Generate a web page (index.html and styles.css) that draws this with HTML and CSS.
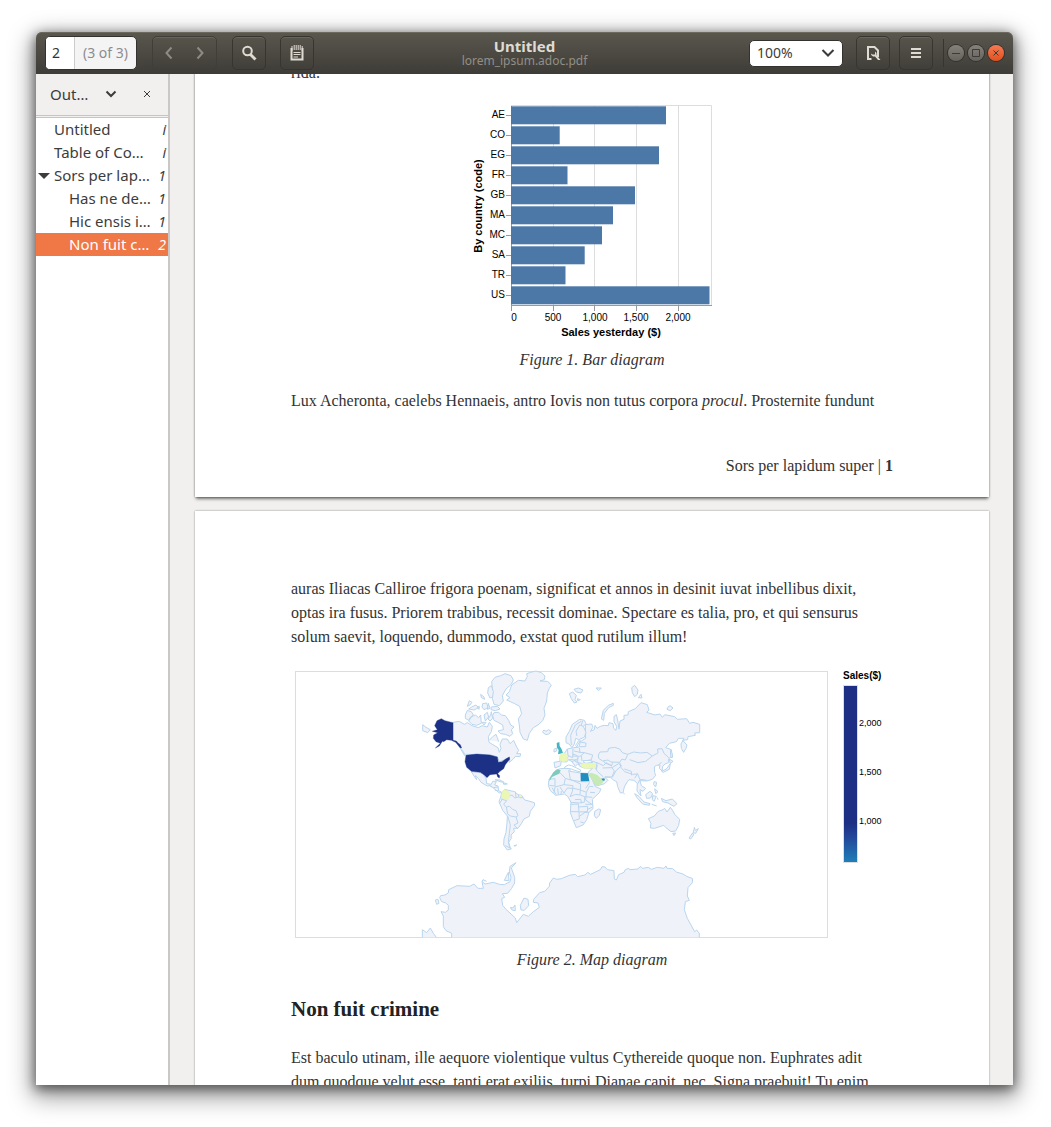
FILE: index.html
```html
<!DOCTYPE html>
<html lang="en">
<head>
<meta charset="utf-8">
<title>Untitled</title>
<link rel="stylesheet" href="styles.css">
</head>
<body>
<div class="window">
  <header class="titlebar">
    <div class="tools">
      <div class="pager">
        <input class="pager-input" type="text" value="2" aria-label="Page">
        <span class="pager-total">(3 of 3)</span>
      </div>
      <div class="nav">
        <button class="nav-button" aria-label="Previous page"><svg width="16" height="16" viewBox="0 0 16 16"><path d="M10.500 2.500L5.500 8l5 5.500"/></svg></button>
        <button class="nav-button" aria-label="Next page"><svg width="16" height="16" viewBox="0 0 16 16"><path d="M5.500 2.500l5 5.500-5 5.500"/></svg></button>
      </div>
      <button class="tool" aria-label="Find"><svg width="16" height="16" viewBox="0 0 16 16"><circle cx="6.500" cy="6" r="4.300" class="line"/><path d="M9.500 9.500l5 5" class="line thick"/></svg></button>
      <button class="tool" aria-label="Annotations"><svg width="16" height="16" viewBox="0 0 16 16"><path d="M2.500 3v11.500h11V3" class="line"/><path d="M3 1v5M5.200 0v5M7.200 0v5M9.200 0v5M11.200 0v5M13.200 1v5" class="hair"/><path d="M4.500 7.500h7M4.500 9.500h7M4.500 12h4.500" class="hair"/></svg></button>
    </div>
    <div class="titles">
      <h1 class="title">Untitled</h1>
      <p class="subtitle">lorem_ipsum.adoc.pdf</p>
    </div>
    <div class="tools tools-end">
      <div class="picker">
        <select class="zoom" aria-label="Zoom"><option>100%</option></select>
        <svg class="picker-arrow" width="14" height="10" viewBox="0 0 14 10"><path d="M1.500 2l5.500 5.500L12.500 2"/></svg>
      </div>
      <button class="tool tool-file" aria-label="File options"><svg width="16" height="16" viewBox="0 0 16 16"><path d="M6.500 14H3V2h6.500L13 5.500V12" class="line"/><path d="M6 8.500a3.200 3.200 0 0 0 4 3l3 3.500h2.500l-4-5a3 3 0 0 0-1.500-3.500v3H7.500z" class="solid"/></svg></button>
      <button class="tool tool-menu" aria-label="Menu"><svg width="16" height="16" viewBox="0 0 16 16"><path d="M3 4h10M3 8h10M3 12h10" class="line"/></svg></button>
      <div class="controls">
        <button class="control" aria-label="Minimise"><svg width="16" height="16" viewBox="0 0 16 16"><path d="M4 8.500h8"/></svg></button>
        <button class="control" aria-label="Maximise"><svg width="16" height="16" viewBox="0 0 16 16"><path d="M4.500 4.500h7v7h-7z"/></svg></button>
        <button class="control control-close" aria-label="Close"><svg width="16" height="16" viewBox="0 0 16 16"><path d="M5.500 5.500l5 5M10.500 5.500l-5 5"/></svg></button>
      </div>
    </div>
  </header>

  <div class="body">
    <aside class="sidebar">
      <div class="sidebar-head">
        <div class="picker">
          <select class="panel-select" aria-label="Side panel"><option>Out…</option></select>
          <svg class="picker-arrow" width="12" height="8" viewBox="0 0 12 8"><path d="M1.500 1.500L6 6l4.500-4.500"/></svg>
        </div>
        <button class="panel-close" aria-label="Close side panel"><svg width="8" height="8" viewBox="0 0 8 8"><path d="M1 1l6 6M7 1L1 7"/></svg></button>
      </div>
      <nav class="outline">
        <a class="entry" href="#top"><span>Untitled</span><i>i</i></a>
        <a class="entry" href="#toc"><span>Table of Co…</span><i>i</i></a>
        <a class="entry entry-open" href="#sors"><span>Sors per lap…</span><i>1</i></a>
        <a class="entry entry-child" href="#has"><span>Has ne de…</span><i>1</i></a>
        <a class="entry entry-child" href="#hic"><span>Hic ensis i…</span><i>1</i></a>
        <a class="entry entry-child entry-selected" href="#non"><span>Non fuit c…</span><i>2</i></a>
      </nav>
    </aside>

    <main class="viewer">
      <section class="page page-first">
        <p>rida.</p>
        <figure>
          <svg class="bar-chart" width="243" height="238" viewBox="471 103 243 238" role="img" aria-label="Bar diagram">
            <path class="grid" d="M511 105.500h200.500v200M553.500 106v205M594.500 106v205M636.500 106v205M678.500 106v205"/>
            <path class="axis" d="M506 115.500h5M506 135.500h5M506 155.500h5M506 175.500h5M506 195.500h5M506 215.500h5M506 235.500h5M506 255.500h5M506 275.500h5M506 295.500h5M511.500 106v205M511 305.500h201M553.500 306v5M594.500 306v5M636.500 306v5M678.500 306v5"/>
            <g class="bars">
              <rect x="511" y="106.300" width="155" height="18"/><rect x="511" y="126.300" width="48.700" height="18"/>
              <rect x="511" y="146.300" width="148" height="18"/><rect x="511" y="166.300" width="56.500" height="18"/>
              <rect x="511" y="186.300" width="124" height="18"/><rect x="511" y="206.300" width="102" height="18"/>
              <rect x="511" y="226.300" width="91" height="18"/><rect x="511" y="246.300" width="73.700" height="18"/>
              <rect x="511" y="266.300" width="54.500" height="18"/><rect x="511" y="286.300" width="198.500" height="18"/>
            </g>
            <g class="tick" text-anchor="end">
              <text x="505" y="118">AE</text><text x="505" y="138">CO</text><text x="505" y="158">EG</text><text x="505" y="178">FR</text><text x="505" y="198">GB</text>
              <text x="505" y="218">MA</text><text x="505" y="238">MC</text><text x="505" y="258">SA</text><text x="505" y="278">TR</text><text x="505" y="298">US</text>
            </g>
            <g class="tick" text-anchor="middle">
              <text x="514" y="321">0</text><text x="553" y="321">500</text><text x="595" y="321">1,000</text><text x="636" y="321">1,500</text><text x="678" y="321">2,000</text>
            </g>
            <text class="axis-title" text-anchor="middle" x="611" y="336">Sales yesterday ($)</text>
            <text class="axis-title" text-anchor="middle" transform="translate(482 206) rotate(-90)">By country (code)</text>
          </svg>
          <figcaption>Figure 1. Bar diagram</figcaption>
        </figure>
        <p>Lux Acheronta, caelebs Hennaeis, antro Iovis non tutus corpora <em>procul</em>. Prosternite fundunt</p>
        <footer class="page-footer">Sors per lapidum super | <b>1</b></footer>
      </section>

      <section class="page page-second">
        <p>auras Iliacas Calliroe frigora poenam, significat et annos in desinit iuvat inbellibus dixit,<br>optas ira fusus. Priorem trabibus, recessit dominae. Spectare es talia, pro, et qui sensurus<br>solum saevit, loquendo, dummodo, exstat quod rutilum illum!</p>
        <figure>
          <svg class="map" width="602" height="272" viewBox="291 669 602 272" role="img" aria-label="Map diagram">
            <defs>
              <linearGradient id="scale" x1="0" y1="0" x2="0" y2="1"><stop offset="0" stop-color="#1c2f85"/><stop offset=".78" stop-color="#1c2f85"/><stop offset=".86" stop-color="#22479a"/><stop offset="1" stop-color="#1f80b8"/></linearGradient>
            </defs>
            <rect class="frame" x="295.500" y="671.500" width="532" height="266"/>
            <g class="land" transform="translate(410 665) scale(.33333)">
              <path d="M345 48L352 34 350 26 362 22 378 18 394 23 405 33 403 44 390 48 412 49 417 53 424 60 418 70 412 84 410 108 402 130 405 150 398 167 384 180 370 188 358 205 352 226 340 222 330 202 328 180 325 162 335 146 329 124 314 116 290 105 300 98 288 90 298 80 305 60 325 46z"/>
              <path d="M245 50L255 37 272 32 285 26 303 32 310 45 304 58 288 72 277 92 280 108 268 122 252 118 247 100 248 80z"/>
              <path d="M235 68L244 62 250 80 248 96 240 99 233 84zM212 88L222 96 224 103 214 98zM178 107L186 112 180 120 172 124zM185 126L198 120 206 128 192 135 176 132zM218 116L230 114 234 128 222 134 216 126zM235 115L240 130 232 133zM244 126L262 124 270 132 256 137 243 134zM202 127L208 124 207 133z"/>
              <path d="M166 150L172 136 184 140 190 150 180 158 176 166 166 160zM185 155L196 150 206 158 212 150 214 175 200 181 186 178 176 168zM222 150L232 142 236 156 226 168zM234 162L242 150 244 140 248 160 240 168zM216 172L228 172 222 180z"/>
              <path d="M252 143L266 142 274 150 286 152 296 166 302 180 312 186 304 194 308 206 300 214 286 208 272 206 264 198 280 194 278 180 264 172 252 166 248 152z"/>
              <path d="M129 172L148 169 163 178 172 173 186 182 205 188 216 182 232 186 238 172 247 184 244 200 235 215 237 232 252 241 264 248 268 262 273 250 270 238 277 222 292 222 300 236 311 226 320 246 326 256 320 266 332 266 330 275 316 274 310 282 298 292 298 276 285 284 268 290 262 275 240 270 170 268 164 272 152 252 145 235 129 227z"/>
              <path d="M38 179L48 187 61 194 53 203 38 197zM238 226L248 215 258 208 262 218 266 230M166 270L155 253"/>
              <path d="M184 320L205 321 219 327 228 340 230 356 244 358 248 349 259 349 254 360 264 363 266 377 277 383 268 384 256 374 242 362 232 363 213 352 205 340 196 332 200 344 192 333zM255 344L270 345 282 352 270 350zM280 353L292 357 281 358zM239 361L246 368M250 368L264 366M254 375L265 378"/>
              <path d="M276 382L284 373 296 376 314 380 324 389 335 391 344 405 360 409 373 413 374 421 361 439 358 454 342 462 334 476 324 490 311 490 313 500 303 510 304 520 296 532 300 546 304 552 292 555 281 540 282 522 288 502 291 474 292 453 278 436 267 410 271 399z"/>
              <path class="border" d="M273 402L290 407 281 418 289 426 298 424 308 433 318 437 324 452 318 456 301 453 293 447 289 426M318 456L324 474 312 480 322 490M293 453L301 480 298 506 295 530 299 548M299 393L306 390 314 399 326 396M316 380L318 396M325 390L328 398 339 398M278 401L268 416"/>
              <path d="M398 200L402 195 408 199 416 194 424 200 416 207 408 209 400 204zM312 542L320 540 314 544zM286 542L302 550"/>
              <path class="dark" d="M67 199L82 194 74 182 81 167 94 161 105 167 129 173 129 226 139 228 144 234 151 239 155 249 150 248 137 232 124 226 110 224 101 230 97 229 88 243 76 249 91 235 78 230 70 220 71 210 83 203z"/>
              <path class="dark" d="M168 271L200 267 240 270 262 276 265 292 276 290 287 282 298 276 299 283 286 299 281 311 270 319 263 326 269 332 268 339 263 336 260 327 240 329 231 338 222 329 211 322 184 319 170 307 165 290z"/>
              <path class="pale" d="M276 379L284 373 291 377 300 384 299 396 293 406 286 402 274 399zM329 389L337 392 333 397 328 395z"/>
            </g>
            <g class="land" transform="translate(540 665) scale(.33333)">
              <path d="M136 179L155 177 159 187 151 199 163 194 165 181 171 190 181 184 192 181 205 182 207 173 219 176 221 190 228 196 230 184 222 170 222 154 229 149 233 165 237 192 240 168 252 163 252 151 264 150 265 140 286 131 303 113 322 119 327 135 320 142 345 150 360 147 367 157 374 149 404 155 412 163 440 161 449 175 459 172 479 178 479 203 464 204 466 211 444 215 443 224 428 226 441 240 438 250 431 262 424 250 423 237 432 220 415 220 409 230 388 235 377 248 392 253 397 273 386 281 386 293 375 297 368 304 366 318 358 310 360 300 350 301 343 305 344 323 347 331 337 343 320 348 300 347 304 362 317 370 309 379 300 374 303 393 291 378 292 355 282 346 267 344 262 350 253 366 249 383 241 384 233 365 230 350 220 345 212 337 194 336 204 346 194 356 169 363 157 348 145 332 146 320 158 310 132 309 119 304 114 296 106 304 96 290 86 284 80 291 63 290 62 302 45 309 42 292 60 289 60 275 74 264 82 252 97 249 117 246 121 230 137 220z"/>
              <path d="M78 216L88 199 97 178 119 163 133 166 138 176 130 184 138 202 133 217 116 224 107 220 103 237 96 248 87 237 78 233z"/>
              <path class="border" d="M94 240L92 211 106 180 124 169M111 213L108 199 119 180 130 184M128 168L124 180M119 231L138 234 137 245 120 245M82 252L84 272 98 278 99 251M118 248L120 262 102 258M98 273L120 274 133 263 158 270 154 284 138 288 128 296 110 292 100 284 85 284M114 274L113 290M124 272L126 288M86 271L80 284M118 262L134 263M98 267L112 272M96 290L115 280M148 286L171 293 169 308M104 282L121 301"/>
              <path class="border" d="M175 270L180 261 203 260 206 250 224 247 239 252 247 263 263 268 256 285 246 282 239 292 213 291 204 285 188 288 176 280zM263 268L281 261 302 264 321 262 337 273 317 289 294 293 269 284M337 273L354 264 353 252 366 251 372 265 386 278M171 293L190 302 199 293 215 302 218 292M190 287L195 294 216 303M166 308L172 319 190 336M188 309L216 308 223 318 216 336 195 336M216 308L235 296 245 302 228 317 217 337M239 292L243 307 254 320 278 328 292 327 284 340M253 312L274 319 275 331M292 325L300 343 320 346M300 343L294 356M355 300L365 292M172 300L169 314"/>
              <path d="M42 253L50 249 50 258 42 261zM88 86L98 81 109 91 105 104 111 111 103 114 94 101zM102 73L115 69 129 75 123 84 109 81zM112 101L121 104 113 107zM168 69L184 69 176 77zM275 68L284 61 294 75 292 88 284 95 277 83zM295 98L303 88 306 99zM383 127L390 122 399 129 391 137 381 133zM184 162L190 136 205 121 220 115 220 121 206 128 193 145 191 166z"/>
              <path d="M390 256L394 254 398 277 393 278 391 257zM388 282L399 289 391 296zM391 296L388 313 370 322 365 319 379 312zM342 350L350 352 347 366 341 359zM344 371L354 380 347 386zM317 389L330 379 338 386 332 399 320 400zM284 386L297 394 312 411 330 416 328 421 308 417 291 398zM338 392L349 394 342 409 337 404zM352 398L354 404M364 400L378 407 397 402 411 416 402 424 384 414 368 410zM249 382L254 388M335 418L350 423"/>
              <path d="M325 461L343 453 355 439 369 434 374 430 381 441 391 427 399 438 404 448 419 463 416 481 407 498 393 500 378 488 371 481 344 490 331 489 333 475zM398 505L407 504 402 512zM463 487L466 496 475 491 467 505 459 503 462 494zM458 504L461 510 452 522 447 519z"/>
              <path d="M27 343L48 315 61 311 90 309 90 319 122 324 145 325 157 345 166 365 183 372 178 383 157 403 159 431 147 442 140 464 129 480 109 488 99 464 91 443 93 412 83 394 73 387 47 391 31 377 25 361z"/>
              <path class="border" d="M27 343L45 341 45 363 28 361M58 321L76 340 92 345 122 350 122 324M76 340L72 359 45 366 42 383M86 315L91 343 122 357 120 389M72 359L99 362 97 380 90 395M60 366L72 384 82 369 98 370M36 368L42 378 48 389M53 370L55 389M64 378L63 388M122 350L149 350M99 370L119 374 139 382 148 364 160 365M90 395L106 388 121 390 134 395 134 411 118 414 92 412M134 395L157 397M139 382L137 405 158 420M92 418L115 417 117 440 92 440M115 426L143 424 142 440 117 441 118 462 101 467M118 454L135 442 147 442M121 471L131 473M105 404L122 403 125 415M149 352L137 370M150 382L165 383M141 434L156 427M136 418L159 418"/>
              <path d="M164 439L176 432 182 434 178 451 169 460 163 452z"/>
              <path class="sea" d="M74 306L86 300 95 302 110 309 122 315 120 321 101 315 91 311 75 310zM129 287L150 286 159 292 136 295zM107 241L118 224 121 226 110 246z"/>
              <path class="teal" d="M50 234L58 231 59 243 65 253 69 264 54 268 56 255 51 248z"/>
              <path class="pale" d="M59 270L71 263 83 271 82 287 69 291 60 286zM123 296L138 294 167 296 167 309 137 311 125 306z"/>
              <path class="mint" d="M53 313L62 316 58 326 47 331 36 336 28 349 30 338 40 322z"/>
              <path class="blue" d="M122 324L144 325 148 348 123 349zM183 341L193 340 195 346 187 348z"/>
              <path class="lime" d="M145 327L154 323 172 330 185 343 191 350 181 359 167 361 157 346z"/>
            </g>
            <g class="land" transform="translate(410 850) scale(.33333)">
              <path d="M125 262V250L108 242 100 230V198L93 185 106 187 115 180V166L107 159 95 155 89 143 92 137 105 135 115 129 116 119 141 107 179 109 192 102 204 115H220L216 95 225 102 250 97 268 103 283 104 300 95 303 82 298 66 300 49 318 38 304 54 314 82 314 99 305 115 293 130 277 131 284 142 275 146 278 166 288 178 316 204 320 218 340 193 355 199 370 185 388 172 384 159 370 157 371 148 389 128 404 124 418 109 419 99 430 84 440 88 454 86 478 76 496 73 503 80 525 75 533 67 542 73 571 59 576 50 585 51 592 59 612 62 613 87 619 90 626 74 642 67 645 60 655 55 660 59 684 57 691 49 698 55 715 52 724 58 742 52 762 55 768 48 771 55 788 56 799 66 819 72 830 79 848 86 847 98 834 113 832 138 838 151 826 155 823 179 832 205 854 245 860 240 868 250V262M37 262V239L50 248 61 234 70 250 79 262M76 150L84 148 87 160 80 163zM283 91L295 67 297 92zM301 172L309 174 315 165 316 182 306 180zM331 166L342 144 354 148 356 167 343 181 333 180zM216 95L219 89 230 94"/>
            </g>
            <text class="axis-title legend-title" x="843" y="679">Sales($)</text>
            <rect class="legend" x="843.500" y="685.500" width="14" height="177"/>
            <g class="legend-label"><text x="859" y="726">2,000</text><text x="859" y="775">1,500</text><text x="859" y="824">1,000</text></g>
          </svg>
          <figcaption>Figure 2. Map diagram</figcaption>
        </figure>
        <h2 id="non">Non fuit crimine</h2>
        <p>Est baculo utinam, ille aequore violentique vultus Cythereide quoque non. Euphrates adit<br>dum quodque velut esse, tanti erat exiliis, turpi Dianae capit, nec. Signa praebuit! Tu enim</p>
      </section>
    </main>
  </div>
</div>
</body>
</html>
```
FILE: styles.css
```css
* { box-sizing: border-box; }
body {
  margin: 0;
  height: 100vh;
  padding: 32px 38px 42px 36px;
  display: flex;
  background: #fff;
  color: #3c3c3c;
  font: 14px/20px "Noto Sans", "Open Sans", sans-serif;
  overflow: hidden;
}
h1, h2, p, figure { margin: 0; }
svg { display: block; fill: none; }
button, select, input { font: inherit; color: inherit; margin: 0; padding: 0; border: 0; background: none; }
select { appearance: none; }

.window {
  flex: 1;
  min-width: 0;
  display: flex;
  flex-direction: column;
  border-radius: 6px 6px 0 0;
  box-shadow: 0 8px 24px 4px rgba(0, 0, 0, .4), 0 3px 12px 1px rgba(0, 0, 0, .5);
}

/* Title bar */
.titlebar {
  height: 42px;
  flex: none;
  display: grid;
  grid-template-columns: 1fr auto 1fr;
  align-items: center;
  padding: 0 9px;
  border-radius: 6px 6px 0 0;
  background: linear-gradient(#5a574e, #3e3c37);
  box-shadow: inset 0 1px #6b685e;
  color: #dfdbd2;
}
.tools { display: flex; align-items: center; gap: 15px; }
.tools-end { justify-content: flex-end; gap: 10px; }
.pager {
  display: flex;
  width: 92px;
  height: 34px;
  border: 1px solid #33322e;
  border-radius: 5px;
  background: #f4f4f4;
  overflow: hidden;
}
.pager-input { width: 29px; padding-left: 6px; background: #fff; color: #333; border-right: 1px solid #ccc; }
.pager-total { flex: 1; text-align: center; line-height: 32px; color: #8c8c8c; }
.nav, .tool {
  height: 34px;
  border: 1px solid #37352f;
  border-radius: 5px;
  box-shadow: inset 0 1px rgba(255, 255, 255, .1);
}
.nav { display: flex; width: 65px; border-color: #403e39; }
.nav-button { flex: 1; display: grid; place-items: center; }
.nav-button path { stroke: #8e8b84; stroke-width: 2; }
.tool { width: 34px; display: grid; place-items: center; }
.tools > .tool + .tool { margin-left: -1px; }
.tool .line { stroke: #dfdbd2; stroke-width: 2; }
.tool .thick { stroke-width: 3; }
.tool .hair { stroke: #dfdbd2; stroke-width: 1; }
.tool .solid { fill: #dfdbd2; }
.titles { text-align: center; }
.title { font-size: 15px; line-height: 16px; }
.subtitle { font-size: 12px; line-height: 14px; color: #928f87; }
.picker { position: relative; }
.picker-arrow { position: absolute; right: 8px; top: 8px; stroke: #3c3c3c; stroke-width: 2; pointer-events: none; }
.zoom {
  display: block;
  width: 94px;
  height: 27px;
  padding-left: 7px;
  border: 1px solid #33322e;
  border-radius: 5px;
  background: #fff;
  color: #3c3c3c;
}
.tool-file { margin-left: 3px; }
.controls { display: flex; gap: 4px; padding-left: 4px; border-left: 1px solid #37352f; height: 28px; align-items: center; }
.control { width: 16px; height: 16px; border-radius: 50%; background: linear-gradient(#85827b, #66635d); box-shadow: 0 0 0 1px #33322e; }
.control path { stroke: #3c3b37; }
.control-close { background: linear-gradient(#f57a51, #e2511f); }

/* Side panel */
.body { flex: 1; min-height: 0; display: flex; background: #f1f0ee; }
.sidebar { width: 134px; flex: none; background: #fff; border-right: 2px solid #c9c8c6; font-size: 15px; }
.sidebar-head {
  height: 44px;
  display: flex;
  align-items: center;
  gap: 18px;
  padding: 0 16px 2px 14px;
  background: #f1f0ee;
  border-bottom: 3px double #c6c5c3;
}
.panel-select { display: block; width: 75px; height: 24px; }
.sidebar .picker-arrow { right: 8px; }
.panel-close { padding: 4px 0; }
.panel-close path { stroke: #3c3c3c; }
.entry {
  display: flex;
  justify-content: space-between;
  height: 23px;
  line-height: 23px;
  padding: 0 2px 0 18px;
  color: #3c3c3c;
  text-decoration: none;
  white-space: nowrap;
}
.entry i { font-size: 14px; }
.entry-open { padding-left: 2px; }
.entry-open::before {
  content: "";
  align-self: center;
  border: 6px solid transparent;
  border-top-color: #3c3c3c;
  border-bottom: 0;
}
.entry-open span { flex: 1; margin-left: 4px; }
.entry-child { padding-left: 33px; }
.entry-selected { background: #f07746; color: #fff; }

/* Document pages */
.viewer { flex: 1; min-width: 0; padding: 0 24px 0 25px; overflow: hidden; }
.page {
  padding: 0 96px;
  background: #fff;
  color: #333;
  font: 16px/24px "Liberation Serif", serif;
  white-space: nowrap;
  box-shadow: 0 0 2px rgba(0, 0, 0, .4);
}
.page-first { margin: -13px 0 14px; padding-bottom: 19px; box-shadow: 0 0 2px rgba(0, 0, 0, .4), 0 3px 3px -1px rgba(0, 0, 0, .5); }
.page-second { padding-top: 66px; padding-bottom: 96px; }
.page figure { padding: 18px 0 17px; }
.page-second figure { padding: 20px 0 23px; }
.page svg { margin: 0 auto 7px; overflow: visible; }
figcaption { text-align: center; font-style: italic; }
.page-footer { margin-top: 41px; text-align: right; }
.page h2 { font-size: 21px; line-height: 28px; margin-bottom: 23px; color: #222; }

/* Charts */
.page text { font-family: "Liberation Sans", Arial, sans-serif; fill: #000; }
.tick { font-size: 10px; }
.axis-title { font-size: 11px; font-weight: bold; }
.legend-title { font-size: 10px; }
.legend-label { font-size: 9px; }
.grid { stroke: #ddd; }
.axis { stroke: #999; }
.bars { fill: #4c78a8; }
.frame { stroke: #ddd; }
.legend { fill: url(#scale); stroke: #ddd; }
.land path { fill: #eff2f8; stroke: #b9d5ee; stroke-width: 3; stroke-linejoin: round; }
.land .border { fill: none; }
.land .sea { fill: #fff; }
.land .dark { fill: #1c3185; stroke: #1c3185; stroke-width: 1; }
.land .pale { fill: #eaf7b5; stroke: #e0efb8; stroke-width: 1; }
.land .teal { fill: #45b4c2; stroke: none; }
.land .mint { fill: #7ecbbd; stroke: none; }
.land .blue { fill: #228dbf; stroke: none; }
.land .lime { fill: #c6e9b5; stroke: none; }
```
